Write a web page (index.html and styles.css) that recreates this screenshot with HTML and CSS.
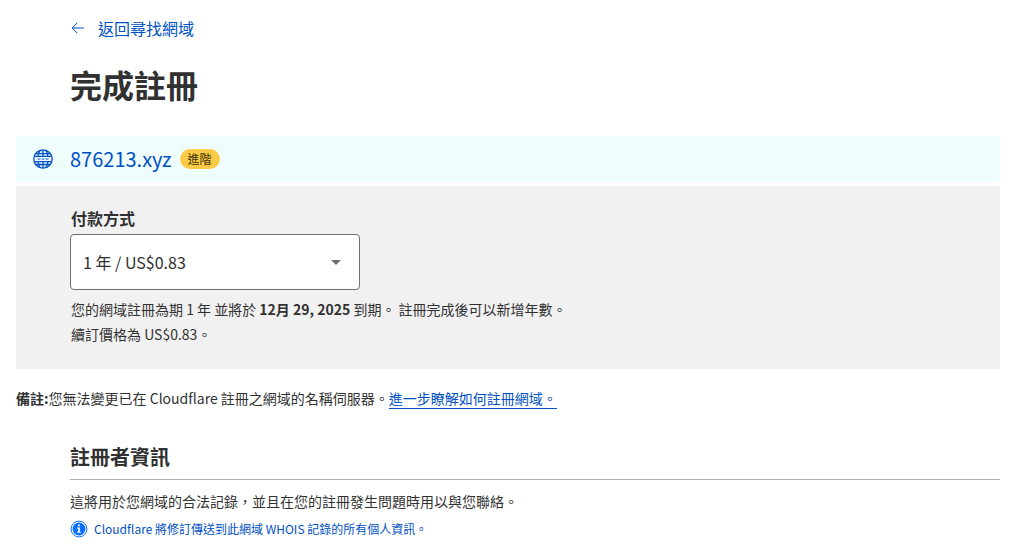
FILE: index.html
```html
<!DOCTYPE html>
<html lang="zh-Hant">
<head>
<meta charset="utf-8">
<meta name="viewport" content="width=device-width, initial-scale=1">
<title>完成註冊</title>
<link rel="stylesheet" href="styles.css">
</head>
<body>
<main class="page">
  <header class="intro">
    <a class="back" href="#">
      <svg class="back-icon" viewBox="0 0 16 16" aria-hidden="true"><path d="M14 8H2.4M7.3 2.8 2.2 8l5.1 5.2"/></svg>
      <span>返回尋找網域</span>
    </a>
    <h1 class="title">完成註冊</h1>
  </header>

  <section class="domain">
    <svg class="globe" viewBox="0 0 20 20" aria-hidden="true">
      <circle cx="10" cy="10" r="9.2"/>
      <path d="M10 1v6M10 13v6M7.4 1.4C6 3 5.3 4.8 5.1 7M12.6 1.4C14 3 14.7 4.8 14.9 7M5.1 13c.2 2.2.9 4 2.3 5.6M14.9 13c-.2 2.2-.9 4-2.3 5.6M2.6 4.6h14.8M1.2 7.4h17.6M1.2 12.6h17.6M2.6 15.5h14.8"/>
      <path class="globe-band" d="m4.6 9.4.7 1.3.7-1.3.7 1.3.7-1.3M8.6 9.4l.7 1.3.7-1.3.7 1.3.7-1.3M12.6 9.4l.7 1.3.7-1.3.7 1.3.7-1.3"/>
    </svg>
    <span class="domain-name">876213.xyz</span>
    <span class="badge">進階</span>
  </section>

  <section class="payment">
    <label class="label" for="term">付款方式</label>
    <div class="select-wrap">
      <select class="select" id="term"><option>1 年 / US$0.83</option></select>
      <svg class="caret" viewBox="0 0 10 5" aria-hidden="true"><path d="M0 0h10L5 5z"/></svg>
    </div>
    <p class="detail">您的網域註冊為期 1 年 並將於 <strong>12月 29, 2025</strong> 到期。 註冊完成後可以新增年數。</p>
    <p class="detail">續訂價格為 US$0.83。</p>
  </section>

  <p class="note"><strong>備註:</strong>您無法變更已在 Cloudflare 註冊之網域的名稱伺服器。<a class="more" href="#">進一步瞭解如何註冊網域。</a></p>

  <section class="registrant">
    <h2 class="subtitle">註冊者資訊</h2>
    <p class="purpose">這將用於您網域的合法記錄，並且在您的註冊發生問題時用以與您聯絡。</p>
    <p class="info">
      <svg class="info-icon" viewBox="0 0 18 18" aria-hidden="true">
        <circle class="info-ring" cx="9" cy="9" r="7.9"/>
        <circle class="info-disc" cx="9" cy="9" r="6.4"/>
        <path class="info-mark" d="M8 4.6h1.9v1.6H8zM7 7.5h2.8v4.3h1.1v1H7v-1h1.1V8.5H7z"/>
      </svg>
      <span>Cloudflare 將修訂傳送到此網域 WHOIS 記錄的所有個人資訊。</span>
    </p>
  </section>
</main>
</body>
</html>
```
FILE: styles.css
```css
* {
  box-sizing: border-box;
}

body {
  margin: 0;
  background: #fff;
  color: #313131;
  font-family: "Noto Sans CJK TC", sans-serif;
  font-size: 14px;
  line-height: 24px;
}

h1, h2, p {
  margin: 0;
}

.page {
  padding: 16px 20px 8px 16px;
}

.intro {
  padding-left: 54px;
}

.back {
  display: inline-flex;
  align-items: center;
  gap: 12px;
  color: #0051c3;
  font-size: 16px;
  text-decoration: none;
}

.back-icon {
  width: 16px;
  height: 16px;
  fill: none;
  stroke: #0051c3;
  stroke-width: 1;
}

.title {
  margin-top: 18px;
  font-size: 32px;
  line-height: 48px;
}

.domain {
  display: flex;
  align-items: center;
  height: 46px;
  margin-top: 28px;
  padding-left: 17px;
  background: #f0fdff;
  color: #0051c3;
}

.globe {
  width: 20px;
  height: 20px;
  fill: none;
  stroke: #0051c3;
  stroke-width: 1.3;
}

.globe-band {
  stroke-width: 0.6;
}

.domain-name {
  margin-left: 17px;
  font-size: 20px;
}

.badge {
  margin-left: 8px;
  padding: 0 8px;
  border-radius: 10px;
  background: #fbca46;
  color: #3d3008;
  font-size: 12px;
  line-height: 20px;
}

.payment {
  margin-top: 4px;
  padding: 20px 54px 22px;
  background: #f1f1f1;
}

.label {
  display: block;
  margin-bottom: 4px;
  padding-left: 1px;
  font-size: 16px;
  font-weight: 700;
}

.select-wrap {
  position: relative;
  max-width: 290px;
  margin-bottom: 7px;
}

.select {
  display: block;
  width: 100%;
  height: 56px;
  padding: 0 40px 0 12px;
  border: 1px solid #6e6e6e;
  border-radius: 4px;
  appearance: none;
  background: #fff;
  color: #313131;
  font: inherit;
  font-size: 16px;
}

.caret {
  position: absolute;
  top: 26px;
  right: 19px;
  width: 10px;
  height: 5px;
  fill: #6e6e6e;
  pointer-events: none;
}

.detail {
  padding-left: 1px;
  line-height: 25px;
}

.note {
  margin-top: 17px;
}

.more {
  border-bottom: 1px solid #0051c3;
  color: #0051c3;
  text-decoration: none;
}

.registrant {
  margin: 33px 0 0 54px;
}

.subtitle {
  padding-bottom: 8px;
  border-bottom: 1px solid #b0b0b0;
  font-size: 20px;
  line-height: 28px;
}

.purpose {
  margin-top: 9px;
}

.info {
  display: flex;
  align-items: center;
  gap: 6px;
  margin-top: 4px;
  color: #0051c3;
  font-size: 12px;
}

.info-icon {
  width: 18px;
  height: 18px;
}

.info-ring {
  fill: #fff;
  stroke: #1674f5;
  stroke-width: 1;
}

.info-disc {
  fill: #086fff;
}

.info-mark {
  fill: #fff;
}
```
